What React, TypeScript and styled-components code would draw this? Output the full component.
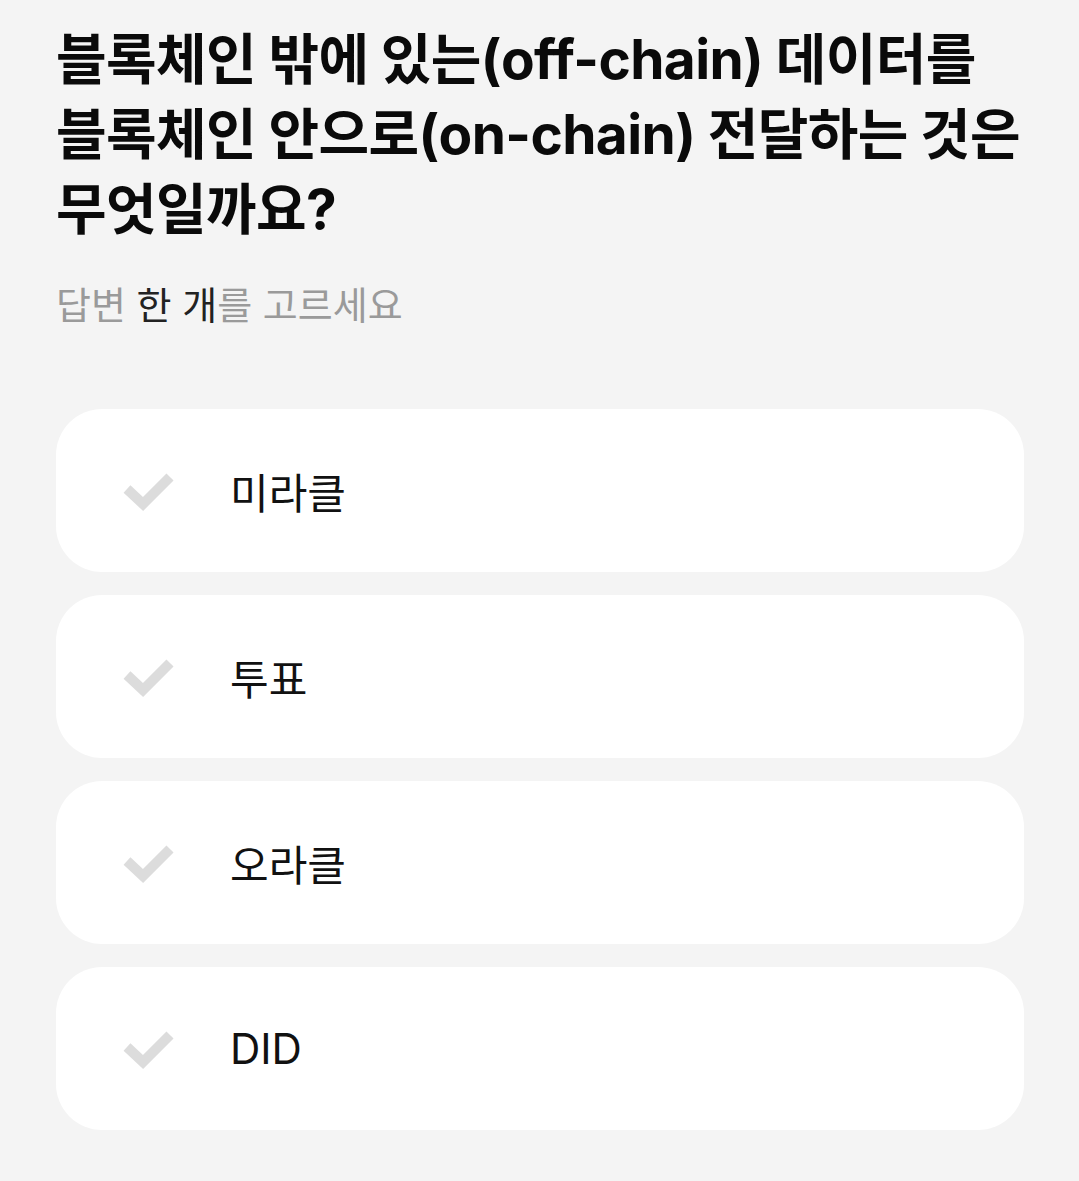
import { createGlobalStyle, styled } from "styled-components";

const GlobalStyle = createGlobalStyle`
  body {
    margin: 0;
    background: #f4f4f4;
    font-family: Inter, "Noto Sans CJK KR", sans-serif;
  }
`;

const options = ["미라클", "투표", "오라클", "DID"];

const CheckIcon = () => (
  <svg width="52" height="40" viewBox="0 0 52 40">
    <polyline
      points="4,18 20,33 47,6"
      fill="none"
      stroke="#dcdcdc"
      strokeWidth="10"
    />
  </svg>
);

export default function App() {
  return (
    <>
      <GlobalStyle />
      <Page>
        <Title>
          블록체인 밖에 있는(off-chain) 데이터를 블록체인 안으로(on-chain) 전달하는 것은 무엇일까요?
        </Title>
        <Hint>
          답변 <Strong>한 개</Strong>를 고르세요
        </Hint>
        <List>
          {options.map((o) => (
            <Option key={o}>
              <CheckIcon />
              <Label>{o}</Label>
            </Option>
          ))}
        </List>
      </Page>
    </>
  );
}

const Page = styled.div`
  padding: 22px 55px 40px 56px;
`;

const Title = styled.h1`
  margin: 0;
  font-size: 55px;
  line-height: 75px;
  font-weight: 700;
  color: #0a0a0a;
  letter-spacing: -0.6px;
  word-break: keep-all;
`;

const Hint = styled.div`
  margin-top: 34px;
  font-size: 38px;
  line-height: 48px;
  color: #9a9a9a;
`;

const Strong = styled.span`
  color: #222;
`;

const List = styled.div`
  margin-top: 80px;
  display: flex;
  flex-direction: column;
  gap: 23px;
`;

const Option = styled.div`
  height: 163px;
  background: #fff;
  border-radius: 46px;
  display: flex;
  align-items: center;
  padding-left: 67px;
`;

const Label = styled.span`
  margin-left: 55px;
  font-size: 42px;
  color: #111;
`;
